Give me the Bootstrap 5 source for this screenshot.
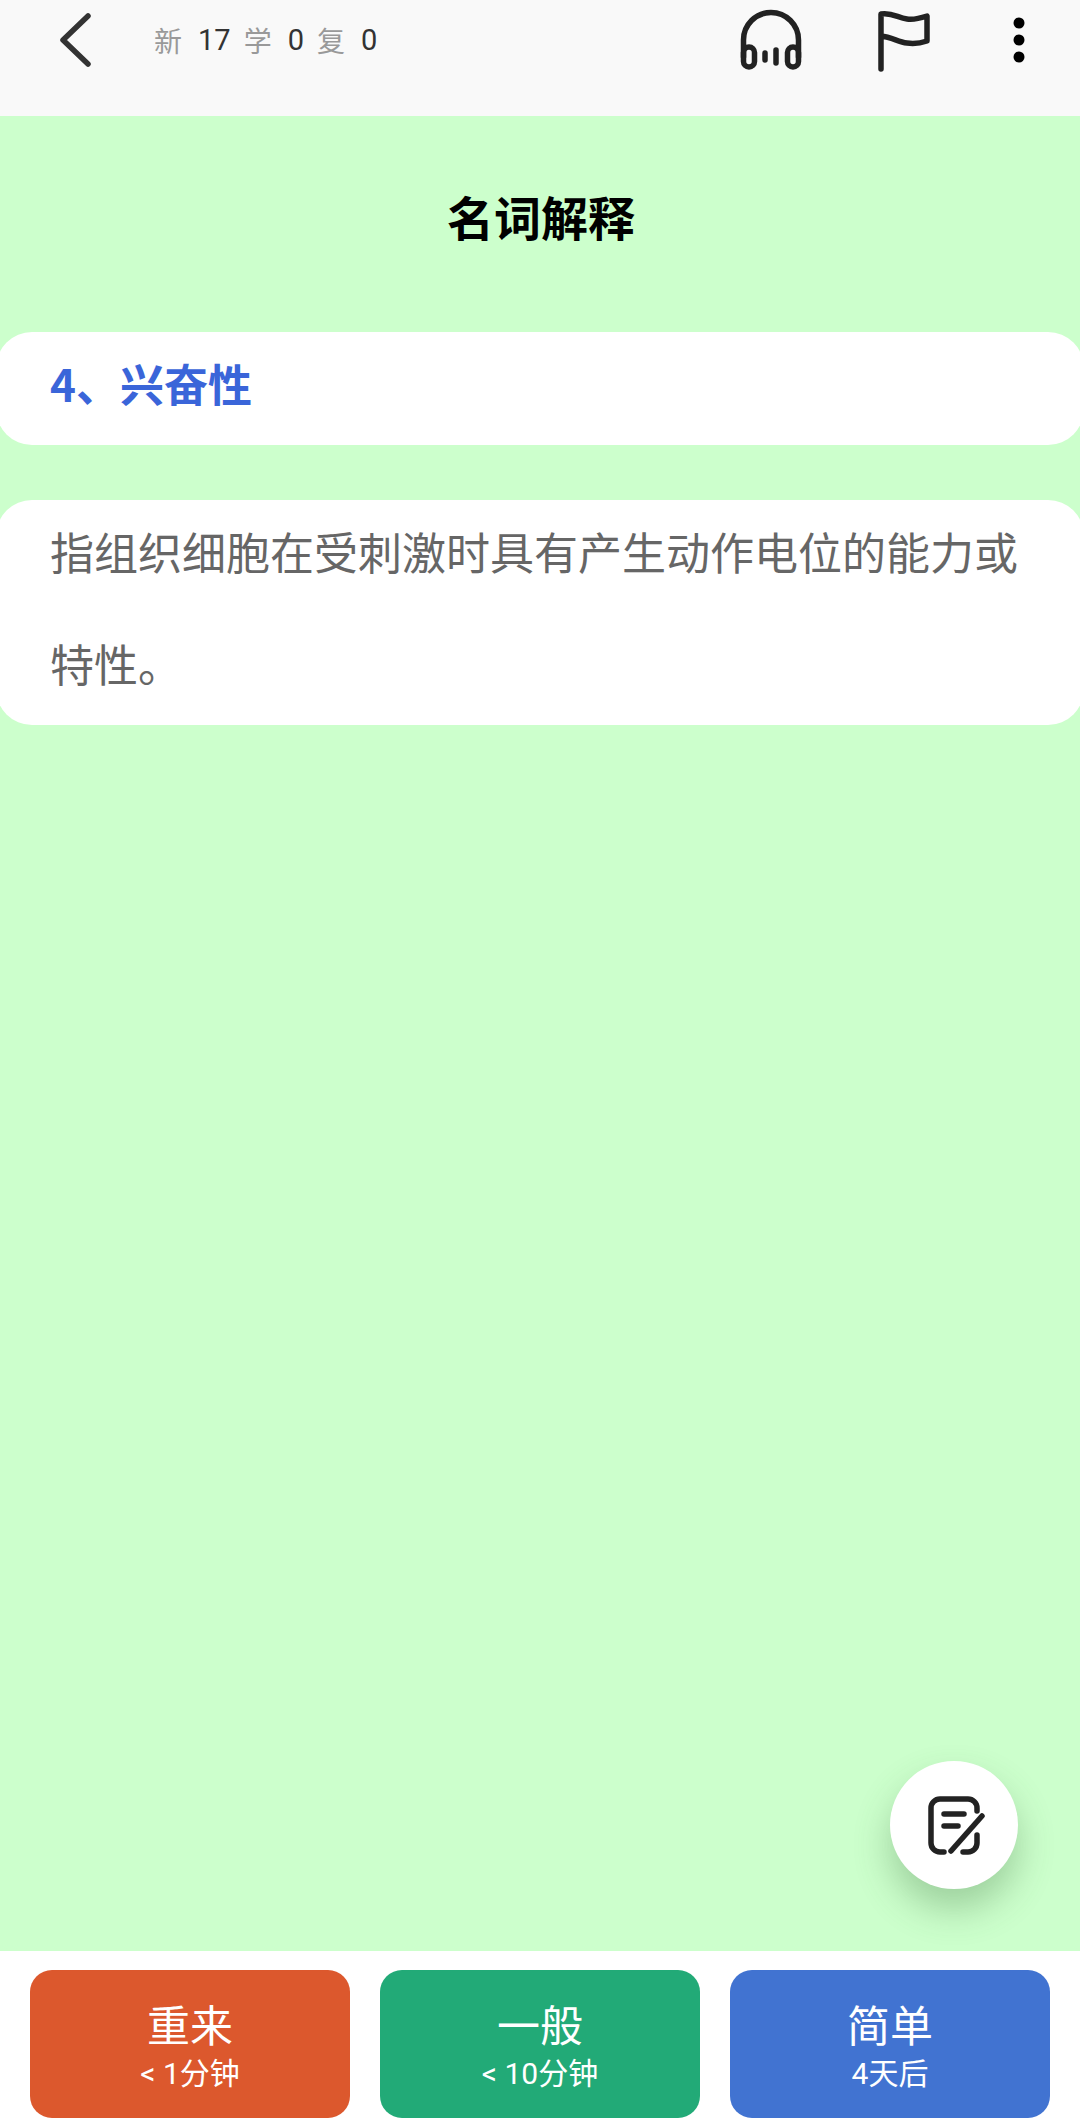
<!DOCTYPE html>
<html lang="zh-CN">
<head>
<meta charset="utf-8">
<link href="https://cdn.jsdelivr.net/npm/bootstrap@5.3.0/dist/css/bootstrap.min.css" rel="stylesheet">
<style>
html,body{height:2122px;margin:0}
body{font-family:"Noto Sans CJK SC",sans-serif;background:#ccffcc;overflow:hidden}
.top-bar{height:116px;padding-bottom:36px;background:#f9f9f9}
.back-ic{width:50px;height:60px;margin-left:55px;margin-right:49px}
.stats{font-size:28px;line-height:1}
.stats .lbl{color:#999;margin-right:16px}
.stats .num{color:#333;font-family:Roboto,sans-serif;font-size:29px;margin-right:13px}
.top-ic-a{width:72px;height:72px;margin-right:65px}
.top-ic-b{width:60px;height:70px;margin-right:75px}
.top-ic-c{width:24px;height:60px;margin-right:49px}
.stage{position:relative;overflow:hidden}
.term-title{font-size:47px;font-weight:700;color:#000;text-align:center;height:216px;line-height:200px;padding-left:2px}
.sheet{display:flow-root;background:#fff;border-radius:36px;margin-left:-4px;margin-right:-4px;padding:0 54px;line-height:112.5px;font-size:44px}
.sheet-text{margin-top:-5px;margin-bottom:5px}
.sheet-q{color:#3a65d9;font-weight:700;margin-bottom:55px}
.sheet-a{color:#666}
.fab-note{position:absolute;left:890px;top:1645px;width:128px;height:128px;border-radius:50%;background:#fff;box-shadow:0 20px 36px rgba(60,110,60,.32)}
.fab-note:hover,.fab-note:active{background:#fff!important}
.fab-note svg{width:64px;height:64px}
.answer-bar{height:171px;background:#fff;padding:19px 30px 4px;gap:30px}
.rate-btn{flex:1 1 0;border-radius:22px;color:#fff;border:0;padding:0}
.rate-main{font-size:43px;line-height:54px}
.rate-sub{font-family:Roboto,"Noto Sans CJK SC",sans-serif;font-size:30px;line-height:36px;margin-top:6px}
.rate-again{background:#dc582d}
.rate-good{background:#22aa77}
.rate-easy{background:#4173d1}
.rate-again:hover,.rate-again:active{background:#dc582d!important;color:#fff!important}
.rate-good:hover,.rate-good:active{background:#22aa77!important;color:#fff!important}
.rate-easy:hover,.rate-easy:active{background:#4173d1!important;color:#fff!important}
</style>
</head>
<body class="d-flex flex-column">
<header class="top-bar d-flex align-items-center flex-shrink-0">
  <svg class="back-ic" viewBox="0 0 50 60" fill="none" stroke="#333" stroke-width="5.5" stroke-linecap="round" stroke-linejoin="round"><path d="M33 6 L8 30 L33 54"/></svg>
  <div class="stats d-flex align-items-center flex-grow-1">
    <span class="lbl">新</span><span class="num">17</span><span class="lbl">学</span><span class="num">0</span><span class="lbl">复</span><span class="num">0</span>
  </div>
  <svg class="top-ic-a" viewBox="0 0 72 72" fill="none" stroke="#222" stroke-width="5.5" stroke-linecap="round"><path d="M8.5 53 V36 a27.5 27.5 0 0 1 55 0 V53"/><rect x="8.5" y="43" width="11" height="20" rx="5.5"/><rect x="52.5" y="43" width="11" height="20" rx="5.5"/><path d="M30 49 V56 M41 46 V59"/></svg>
  <svg class="top-ic-b" viewBox="0 0 60 70" fill="none" stroke="#222" stroke-width="5.5" stroke-linecap="round" stroke-linejoin="round"><path d="M9 64 V9 C20 7 26 13 35 14 C42 15 49 13 55 11 V36 C49 38 42 39 35 38 C26 37 20 32 9 31"/></svg>
  <svg class="top-ic-c" viewBox="0 0 24 60" fill="#000"><circle cx="12" cy="13" r="5.5"/><circle cx="12" cy="30" r="5.5"/><circle cx="12" cy="47" r="5.5"/></svg>
</header>
<main class="stage flex-grow-1">
  <h1 class="term-title m-0">名词解释</h1>
  <div class="sheet sheet-q"><div class="sheet-text">4、兴奋性</div></div>
  <div class="sheet sheet-a"><div class="sheet-text">指组织细胞在受刺激时具有产生动作电位的能力或特性。</div></div>
  <button class="fab-note btn d-flex align-items-center justify-content-center p-0" type="button" aria-label="笔记">
    <svg viewBox="0 0 64 64" fill="none" stroke="#222" stroke-width="5.5" stroke-linecap="round" stroke-linejoin="round"><path d="M55 18 V15 a9 9 0 0 0 -9 -9 H18 a9 9 0 0 0 -9 9 V50 a9 9 0 0 0 9 9 H22"/><path d="M55 42 V50 a9 9 0 0 1 -9 9 H41"/><path d="M29 58 L60 23"/><path d="M22 21 H42 M22 33 H36"/></svg>
  </button>
</main>
<footer class="answer-bar d-flex flex-shrink-0">
  <button class="rate-btn rate-again btn" type="button"><div class="rate-main">重来</div><div class="rate-sub">&lt; 1分钟</div></button>
  <button class="rate-btn rate-good btn" type="button"><div class="rate-main">一般</div><div class="rate-sub">&lt; 10分钟</div></button>
  <button class="rate-btn rate-easy btn" type="button"><div class="rate-main">简单</div><div class="rate-sub">4天后</div></button>
</footer>
<script src="https://cdn.jsdelivr.net/npm/bootstrap@5.3.0/dist/js/bootstrap.bundle.min.js"></script>
</body>
</html>
